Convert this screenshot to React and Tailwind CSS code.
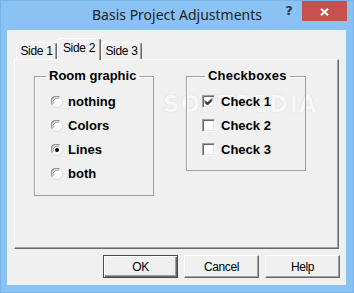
import React from "react";

function Radio({ checked }) {
  return (
    <svg width="12" height="12" viewBox="0 0 12 12" className="shrink-0">
      <circle cx="6" cy="6" r="5.5" fill="#ffffff" stroke="#d8d8d8" strokeWidth="1" />
      <path d="M1.3 8.3 A5 5 0 0 1 8.3 1.3" fill="none" stroke="#8f8f8f" strokeWidth="1.2" />
      <path d="M2.4 7.4 A3.8 3.8 0 0 1 7.4 2.4" fill="none" stroke="#6c6c6c" strokeWidth="0.8" />
      {checked && <circle cx="6" cy="6" r="2" fill="#000000" />}
    </svg>
  );
}

function Check({ checked }) {
  return (
    <div className="w-[13px] h-[13px] shrink-0 bg-white border-t border-l border-t-[#a0a0a0] border-l-[#a0a0a0] border-b border-r border-b-white border-r-white shadow-[inset_1px_1px_0_#696969,inset_-1px_-1px_0_#e3e3e3] flex items-center justify-center">
      {checked && (
        <svg width="9" height="9" viewBox="0 0 9 9">
          <path d="M1 3.5 L3.5 6 L8 1.5 M1 4.5 L3.5 7 L8 2.5 M1 5.5 L3.5 8 L8 3.5" fill="none" stroke="#000" strokeWidth="1" />
        </svg>
      )}
    </div>
  );
}

function Tab({ label, selected }) {
  if (selected) {
    return (
      <div className="relative z-10 w-[44px] h-[22px] -mb-[1px] bg-[#f0f0f0] border-l border-t border-l-white border-t-white border-r border-r-[#696969] rounded-t-[3px] shadow-[inset_-1px_0_0_#a0a0a0] flex items-start justify-center pt-[2px] text-[12px] leading-[15px] tracking-[-0.3px] text-black">
        {label}
      </div>
    );
  }
  return (
    <div className="w-[41px] h-[17px] bg-[#f0f0f0] border-l border-t border-l-white border-t-white border-r border-r-[#696969] rounded-t-[3px] shadow-[inset_-1px_0_0_#a0a0a0] flex items-start justify-center pt-[1px] text-[12px] leading-[15px] tracking-[-0.3px] text-black">
      {label}
    </div>
  );
}

function Button({ label, isDefault }) {
  return (
    <div
      className={
        "w-[75px] h-[23px] bg-[#f0f0f0] flex items-center justify-center text-[12px] tracking-[-0.4px] text-black " +
        (isDefault
          ? "border border-[#4a4a4a] shadow-[inset_1px_1px_0_#ffffff,inset_-1px_-1px_0_#696969,inset_-2px_-2px_0_#a0a0a0]"
          : "border-t border-l border-t-white border-l-white border-b border-r border-b-[#696969] border-r-[#696969] shadow-[inset_-1px_-1px_0_#a0a0a0]")
      }
    >
      {label}
    </div>
  );
}

export default function App() {
  return (
    <div className="w-[354px] h-[293px] bg-[#8ac3f3] border border-[#78b2e6] flex flex-col font-['Liberation_Sans',Arial,sans-serif] overflow-hidden">
      {/* Title bar */}
      <div className="h-[29px] shrink-0 grid grid-cols-[1fr_auto_1fr] items-start">
        <div />
        <div className="pt-[4px] font-['Noto_Sans',sans-serif] text-[14px] leading-[20px] text-[#222222] whitespace-nowrap">
          Basis Project Adjustments
        </div>
        <div className="flex justify-end items-start pr-[6px]">
          <div className="w-[26px] h-[20px] flex items-center justify-center font-['DejaVu_Sans',sans-serif] font-bold text-[13px] leading-[20px] text-[#333333]">
            ?
          </div>
          <div className="w-[45px] h-[20px] bg-[#c75050] flex items-center justify-center pt-[1px]">
            <svg width="9" height="8" viewBox="0 0 9 8">
              <path d="M1 0.8 L8 7.2 M8 0.8 L1 7.2" stroke="#ffffff" strokeWidth="2" fill="none" />
            </svg>
          </div>
        </div>
      </div>

      {/* Client area */}
      <div className="mx-[6px] w-[339px] h-[255px] bg-[#f0f0f0] flex flex-col pt-[8px]">
        <div className="pl-[7px] flex flex-col">
          {/* Tabs */}
          <div className="flex items-end h-[21px] pl-[2px]">
            <Tab label="Side 1" />
            <Tab label="Side 2" selected />
            <Tab label="Side 3" />
          </div>
          {/* Panel */}
          <div className="relative w-[325px] h-[190px] border-t border-l border-t-white border-l-white border-b border-r border-b-[#696969] border-r-[#696969] shadow-[inset_-1px_-1px_0_#a0a0a0] flex items-start gap-[32px] pl-[19px] pt-[9px]">
            {/* watermark (behind content) */}
            <div className="absolute left-[148px] top-[32px] z-0 pointer-events-none">
              <span className="font-['DejaVu_Sans',sans-serif] font-bold text-[23px] leading-[24px] tracking-[1px] text-[#f7f7f7] [text-shadow:0_0_1px_rgba(0,0,0,0.18)] whitespace-nowrap">
                SOFTPEDIA
              </span>
            </div>
            <fieldset className="relative z-10 w-[120px] min-w-0 h-[127px] border border-[#a0a0a0] shadow-[inset_1px_1px_0_#ffffff] pl-[16px] pt-[6px]">
              <legend className="-ml-[5px] px-[3px] font-bold text-[13px] leading-[14px] text-black whitespace-nowrap">Room graphic</legend>
              {[
                ["nothing", false],
                ["Colors", false],
                ["Lines", true],
                ["both", false],
              ].map(([t, c]) => (
                <div key={t} className="h-[24px] flex items-center gap-[5px]">
                  <div className="pt-[1px] flex">
                    <Radio checked={c} />
                  </div>
                  <span className="font-bold text-[13px] leading-[15px] text-black whitespace-nowrap">{t}</span>
                </div>
              ))}
            </fieldset>
            <fieldset className="relative z-10 w-[120px] min-w-0 h-[102px] border border-[#a0a0a0] shadow-[inset_1px_1px_0_#ffffff] pl-[15px] pt-[6px]">
              <legend className="ml-[3px] px-[3px] font-bold text-[13px] leading-[14px] tracking-[0.2px] text-black whitespace-nowrap">Checkboxes</legend>
              {[
                ["Check 1", true],
                ["Check 2", false],
                ["Check 3", false],
              ].map(([t, c]) => (
                <div key={t} className="h-[24px] flex items-center gap-[6px]">
                  <Check checked={c} />
                  <span className="font-bold text-[13px] leading-[15px] text-black whitespace-nowrap">{t}</span>
                </div>
              ))}
            </fieldset>
          </div>
        </div>

        {/* Buttons */}
        <div className="mt-[6px] flex justify-end gap-[6px] pr-[6px]">
          <Button label="OK" isDefault />
          <Button label="Cancel" />
          <Button label="Help" />
        </div>
      </div>
    </div>
  );
}
